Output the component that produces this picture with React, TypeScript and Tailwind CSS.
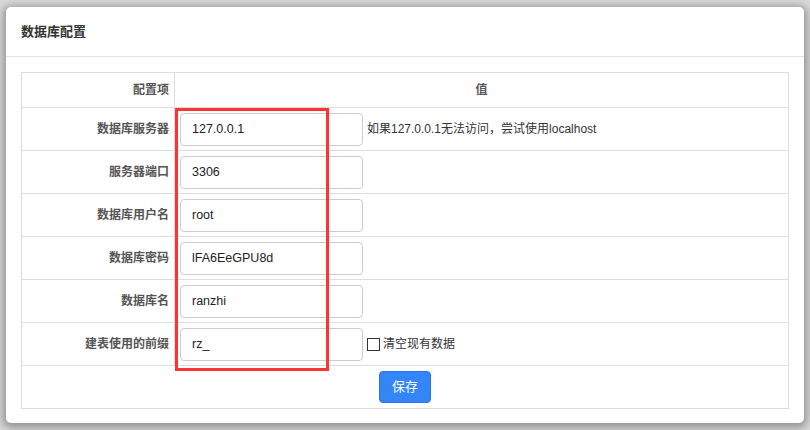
import React from "react";

const font = { fontFamily: '"Liberation Sans", "Noto Sans CJK SC", sans-serif' };

const rows = [
  { label: "数据库服务器", value: "127.0.0.1", extra: "help" },
  { label: "服务器端口", value: "3306" },
  { label: "数据库用户名", value: "root" },
  { label: "数据库密码", value: "lFA6EeGPU8d" },
  { label: "数据库名", value: "ranzhi" },
  { label: "建表使用的前缀", value: "rz_", extra: "check" },
];

export default function App() {
  return (
    <div
      className="h-[430px] w-[810px] bg-[#d9d9d9] pt-[7px] pl-[6px] pr-[6px] pb-[7px] text-[#333]"
      style={font}
    >
      <div className="relative flex h-full flex-col rounded-[5px] bg-white shadow-[0_2px_8px_3px_rgba(0,0,0,0.32)]">
        <div className="flex h-[50px] items-center border-b border-[#e3e3e3] pl-[15px] text-[13px] font-bold text-[#333]">
          数据库配置
        </div>
        <div className="px-[15px] pt-[15px]">
          <table className="w-full border-collapse text-[12px]">
            <thead>
              <tr className="h-[35px]">
                <th className="w-[153px] border border-[#ddd] pr-[5px] text-right font-bold text-[#555]">配置项</th>
                <th className="border border-[#ddd] text-center font-bold text-[#555]">值</th>
              </tr>
            </thead>
            <tbody>
              {rows.map((r) => (
                <tr key={r.label} className="h-[43px]">
                  <td className="border border-[#ddd] pr-[5px] text-right font-bold text-[#555]">{r.label}</td>
                  <td className="border border-[#ddd] pl-[5px]">
                    <div className="flex items-center">
                      <input
                        readOnly
                        value={r.value}
                        className="h-[33px] w-[183px] rounded-[4px] border border-[#ccc] px-[11px] text-[12.5px] text-[#222] outline-none"
                        style={font}
                      />
                      {r.extra === "help" && (
                        <span className="ml-[4px] text-[12px] text-[#333]">如果127.0.0.1无法访问，尝试使用localhost</span>
                      )}
                      {r.extra === "check" && (
                        <label className="ml-[4px] flex items-center gap-[3px] text-[12px] text-[#333]">
                          <span className="inline-block h-[13px] w-[13px] border border-[#333] bg-white" />
                          清空现有数据
                        </label>
                      )}
                    </div>
                  </td>
                </tr>
              ))}
              <tr className="h-[43px]">
                <td colSpan={2} className="border border-[#ddd] text-center">
                  <button className="h-[32px] w-[52px] rounded-[4px] border border-[#2a74e6] bg-[#3385f8] text-[13px] text-white">
                    保存
                  </button>
                </td>
              </tr>
            </tbody>
          </table>
        </div>
        <div className="pointer-events-none absolute left-[169px] top-[101px] h-[263px] w-[154px] border-[3px] border-[#f33]" />
      </div>
    </div>
  );
}
